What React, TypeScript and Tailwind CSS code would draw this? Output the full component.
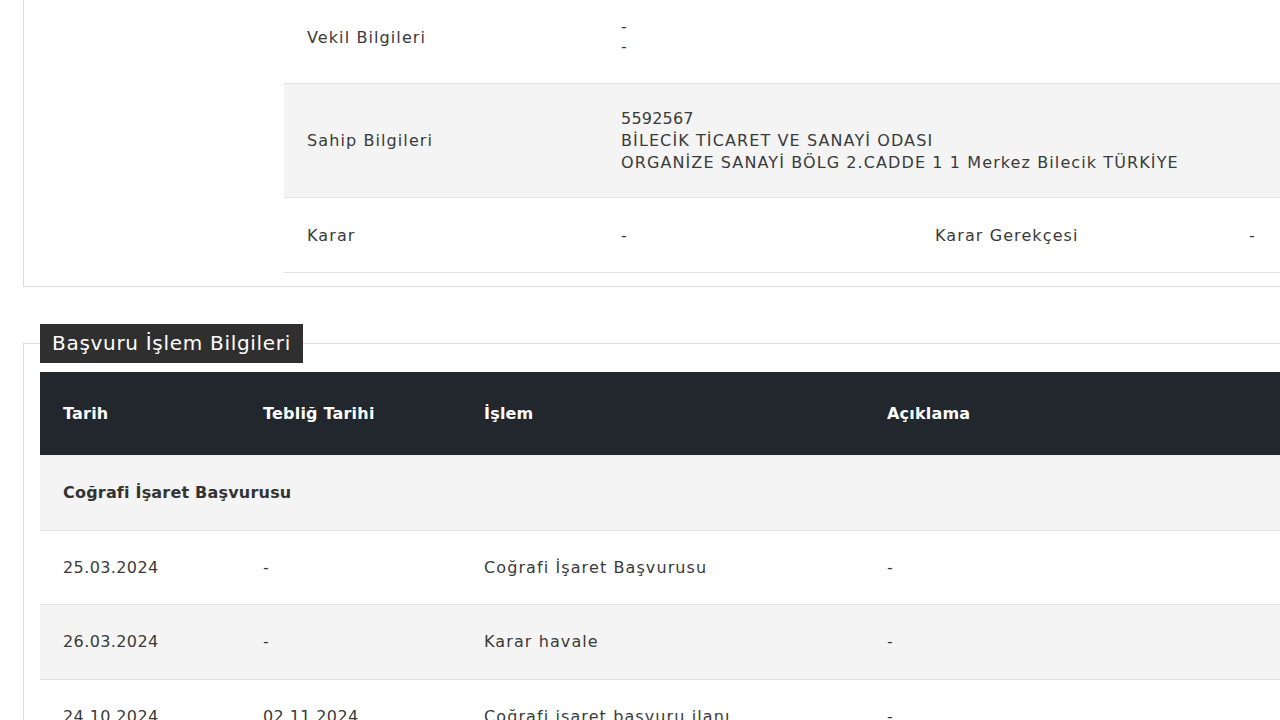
const font = { fontFamily: '"DejaVu Sans", "Open Sans", sans-serif' };

const events = [
  { date: '25.03.2024', notify: '-', action: 'Coğrafi İşaret Başvurusu', note: '-' },
  { date: '26.03.2024', notify: '-', action: 'Karar havale', note: '-' },
  { date: '24.10.2024', notify: '02.11.2024', action: 'Coğrafi işaret başvuru ilanı', note: '-' },
];

export default function App() {
  return (
    <div className="w-[1280px] h-[720px] overflow-hidden bg-white text-[16px] tracking-[1.1px] text-[#3a3a3a]" style={font}>
      {/* Owner / attorney details */}
      <div className="ml-[23px] w-[1600px] border-l border-b border-[#dcdcdc] pl-[260px] pb-[13px]">
        <div className="w-[1256px]">
          <div className="grid grid-cols-4 border-b border-[#e2e2e2] pt-[17px] pb-[26px]">
            <div className="flex items-center pl-[23px] pt-[2px]">Vekil Bilgileri</div>
            <div className="col-span-3 pl-[23px] leading-[20px]">
              <div>-</div>
              <div>-</div>
            </div>
          </div>
          <div className="grid grid-cols-4 border-b border-[#e2e2e2] bg-[#f4f4f4] pt-[24px] pb-[23px]">
            <div className="flex items-center pl-[23px]">Sahip Bilgileri</div>
            <div className="col-span-3 pl-[23px] leading-[22px]">
              <div className="tracking-[0.2px]">5592567</div>
              <div>BİLECİK TİCARET VE SANAYİ ODASI</div>
              <div>ORGANİZE SANAYİ BÖLG 2.CADDE 1 1 Merkez Bilecik TÜRKİYE</div>
            </div>
          </div>
          <div className="grid grid-cols-4 border-b border-[#e2e2e2] h-[75px] items-center pt-[1px]">
            <div className="pl-[23px]">Karar</div>
            <div className="pl-[23px]">-</div>
            <div className="pl-[23px]">Karar Gerekçesi</div>
            <div className="pl-[23px]">-</div>
          </div>
        </div>
      </div>

      {/* Application process */}
      <fieldset className="mt-[37px] ml-[23px] w-[1600px] border-l border-t border-[#dcdcdc] px-[16px]">
        <legend className="bg-[#2f2f2f] text-white text-[20px] tracking-[0.7px] h-[39px] leading-[39px] px-[12px]">
          Başvuru İşlem Bilgileri
        </legend>
        <div className="mt-[9px] w-[1500px]">
          <div className="grid grid-cols-[200px_221px_403px_1fr] h-[83px] items-center bg-[#22262d] text-white font-bold tracking-[0.2px]">
            <div className="pl-[23px]">Tarih</div>
            <div className="pl-[23px]">Tebliğ Tarihi</div>
            <div className="pl-[23px]">İşlem</div>
            <div className="pl-[23px]">Açıklama</div>
          </div>
          <div className="h-[76px] flex items-center pl-[23px] bg-[#f4f4f4] border-b border-[#e2e2e2] font-bold tracking-[0.2px] text-[#333]">
            Coğrafi İşaret Başvurusu
          </div>
          {events.map((e, i) => (
            <div
              key={e.date}
              className={`grid grid-cols-[200px_221px_403px_1fr] items-center border-b border-[#e2e2e2] ${i === 0 ? 'h-[74px]' : 'h-[75px]'} ${i % 2 === 1 ? 'bg-[#f4f4f4]' : 'bg-white'}`}
            >
              <div className="pl-[23px] tracking-[0.4px]">{e.date}</div>
              <div className="pl-[23px] tracking-[0.4px]">{e.notify}</div>
              <div className="pl-[23px]">{e.action}</div>
              <div className="pl-[23px]">{e.note}</div>
            </div>
          ))}
        </div>
      </fieldset>
    </div>
  );
}
